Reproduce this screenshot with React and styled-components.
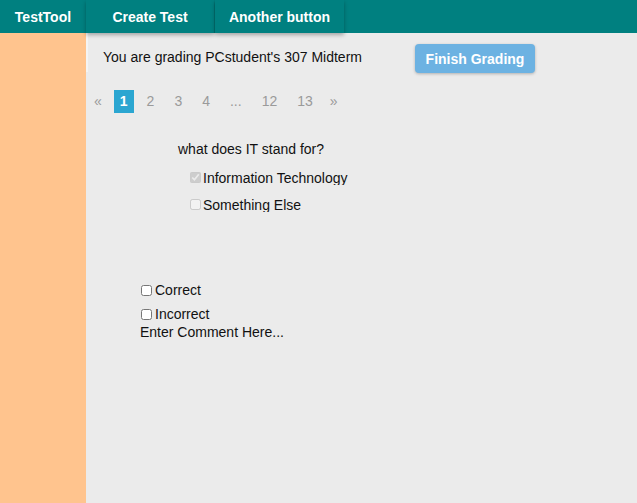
import React from 'react';
import styled, { createGlobalStyle } from 'styled-components';

const GlobalStyle = createGlobalStyle`
  html, body {
    margin: 0;
    padding: 0;
    height: 100%;
    font-family: "Liberation Sans", Arial, sans-serif;
    font-size: 14px;
    color: #111;
  }
  #root {
    height: 100%;
  }
`;

const Page = styled.div`
  display: flex;
  flex-direction: column;
  height: 100vh;
`;

const NavBar = styled.div`
  display: flex;
  align-items: stretch;
  height: 33px;
  background: #008080;
  flex-shrink: 0;
  position: relative;
  z-index: 2;
`;

const Brand = styled.div`
  width: 86px;
  display: flex;
  align-items: center;
  justify-content: center;
  color: #fff;
  font-weight: bold;
  font-size: 14px;
`;

const NavButton = styled.button`
  width: ${p => p.width}px;
  margin-right: 1px;
  border: none;
  background: #008080;
  color: #fff;
  font-family: inherit;
  font-weight: bold;
  font-size: 14px;
  box-shadow: 0 2px 4px rgba(0, 0, 0, 0.3);
  cursor: pointer;
`;

const Body = styled.div`
  flex: 1;
  display: grid;
  grid-template-columns: 86px 1fr;
`;

const Sidebar = styled.div`
  background: #ffc48e;
`;

const Main = styled.div`
  background: #ebebeb;
  display: flex;
  flex-direction: column;
`;

const Header = styled.div`
  display: flex;
  align-items: flex-start;
  height: 39px;
  border-left: 2px solid #f4f4f4;
  padding-left: 15px;
`;

const Title = styled.div`
  margin-top: 16px;
  line-height: 16px;
`;

const FinishButton = styled.button`
  margin-top: 11px;
  margin-left: 53px;
  width: 120px;
  height: 29px;
  border: none;
  border-radius: 4px;
  background: #6cb2e2;
  color: #fff;
  font-family: inherit;
  font-weight: bold;
  font-size: 14px;
  box-shadow: 0 1px 3px rgba(0, 0, 0, 0.25);
  flex-shrink: 0;
`;

const Pager = styled.ul`
  display: flex;
  list-style: none;
  margin: 18px 0 0;
  padding: 0;
`;

const PageItem = styled.li`
  margin: 0 ${p => (p.active ? '3px 0 4px' : '4px')};
  padding: 0 ${p => (p.arrow ? 4 : 6)}px;
  height: 23px;
  line-height: 23px;
  font-size: 14px;
  color: ${p => (p.active ? '#fff' : '#9a9a9a')};
  background: ${p => (p.active ? '#2ba6d1' : 'transparent')};
  font-weight: ${p => (p.active ? 'bold' : 'normal')};

  &:last-child {
    margin-left: 3px;
  }
`;

const Question = styled.div`
  margin-top: 28px;
  padding-left: 92px;
  line-height: 16px;
`;

const Options = styled.div`
  margin-top: 12px;
  padding-left: 100px;
  display: flex;
  flex-direction: column;
  gap: 11px;
`;

const Option = styled.label`
  display: flex;
  align-items: flex-start;
  height: 16px;
  overflow: hidden;
  line-height: 18px;

  input {
    width: 11px;
    height: 11px;
    margin: 3px 2px 0 4px;
  }
`;

const Grading = styled.div`
  margin-top: 69px;
  padding-left: 51px;
  display: flex;
  flex-direction: column;
  gap: 6px;
`;

const Mark = styled.label`
  display: flex;
  align-items: center;
  line-height: 18px;

  input {
    width: 11px;
    height: 11px;
    margin: 0 3px 0 4px;
  }
`;

const Comment = styled.div`
  margin-top: -5px;
  padding-left: 3px;
  line-height: 16px;
`;

const pages = ['«', '1', '2', '3', '4', '...', '12', '13', '»'];

export default function App() {
  return (
    <>
      <GlobalStyle />
      <Page>
        <NavBar>
          <Brand>TestTool</Brand>
          <NavButton width={128}>Create Test</NavButton>
          <NavButton width={129}>Another button</NavButton>
        </NavBar>
        <Body>
          <Sidebar />
          <Main>
            <Header>
              <Title>You are grading PCstudent's 307 Midterm</Title>
              <FinishButton>Finish Grading</FinishButton>
            </Header>
            <Pager>
              {pages.map((p, i) => (
                <PageItem key={i} active={p === '1'} arrow={p === '«' || p === '»'}>
                  {p}
                </PageItem>
              ))}
            </Pager>
            <Question>what does IT stand for?</Question>
            <Options>
              <Option>
                <input type="checkbox" checked disabled readOnly />
                Information Technology
              </Option>
              <Option>
                <input type="checkbox" disabled />
                Something Else
              </Option>
            </Options>
            <Grading>
              <Mark>
                <input type="checkbox" />
                Correct
              </Mark>
              <Mark>
                <input type="checkbox" />
                Incorrect
              </Mark>
              <Comment>Enter Comment Here...</Comment>
            </Grading>
          </Main>
        </Body>
      </Page>
    </>
  );
}
